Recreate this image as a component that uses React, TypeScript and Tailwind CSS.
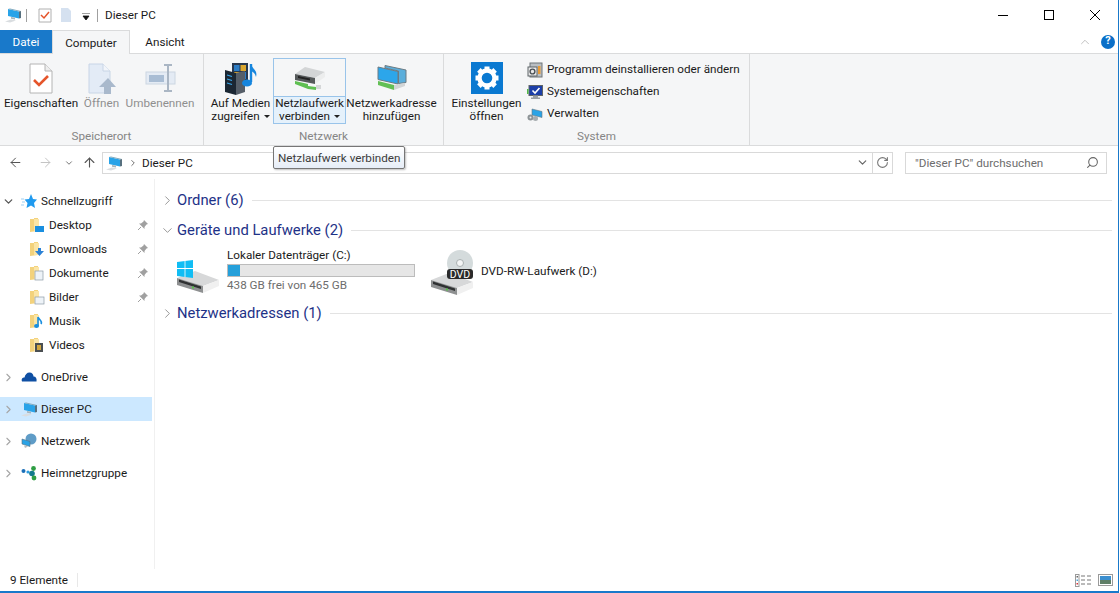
import { ArrowLeft, ArrowRight, ArrowUp, ChevronDown, ChevronRight, ChevronUp, RotateCw, Search } from "lucide-react";
import type { ReactNode } from "react";

const PcIcon = ({ size = 16 }: { size?: number }) => (
  <svg width={size} height={size} viewBox="0 0 16 16" className="shrink-0">
    <path d="M0 14.5 L6 12.5 L11 13.5 L5 15.5Z" fill="#d9dde0" />
    <path d="M3 2 L14 4.5 V11.5 L3 9Z" fill="#29a3e8" />
    <path d="M3 2 L5 1.5 L16 4 L14 4.5Z" fill="#7fa8bd" />
    <path d="M14 4.5 L16 4 V11 L14 11.5Z" fill="#57707f" />
    <path d="M6 10 L10 10.8 V12.5 L6 11.8Z" fill="#a9b4ba" />
  </svg>
);

const PageCheckIcon = () => (
  <svg width="24" height="31" viewBox="0 0 24 31">
    <path d="M1 1H16L23 8V30H1Z" fill="#fff" stroke="#b4b4b4" />
    <path d="M16 1V8H23" fill="#eee" stroke="#b4b4b4" />
    <path d="M5 17L10 22L19 13" fill="none" stroke="#e5552b" strokeWidth="2.6" />
  </svg>
);

const OpenIcon = () => (
  <svg width="28" height="31" viewBox="0 0 28 31">
    <path d="M1 1H15L22 8V30H1Z" fill="#e3ebf6" stroke="#c8d5e6" />
    <path d="M15 1V8H22" fill="#f2f5fa" stroke="#c8d5e6" />
    <path d="M20 15L28 24H23V31H16V24H11Z" fill="#a9b9cc" />
  </svg>
);

const RenameIcon = () => (
  <svg width="31" height="28" viewBox="0 0 31 28">
    <rect x="1" y="8" width="29" height="12" fill="#e4ebf4" stroke="#ccd6e2" />
    <rect x="4" y="11" width="15" height="7" fill="#a9bdd4" />
    <path d="M19 1H27M23 1V27M19 27H27" fill="none" stroke="#aab6c4" strokeWidth="2" />
  </svg>
);

const MediaIcon = () => (
  <svg width="34" height="33" viewBox="0 0 34 33">
    <path d="M8 1H24V19H8Z" fill="#27384e" />
    <rect x="10" y="3" width="5.5" height="6" fill="#2c7cc4" />
    <rect x="16.5" y="3" width="5.5" height="6" fill="#d9a62e" />
    <rect x="10" y="10" width="5.5" height="7" fill="#d9a62e" />
    <rect x="16.5" y="10" width="5.5" height="7" fill="#2c7cc4" />
    <path d="M1 8L12 11V33L1 30Z" fill="#1b2733" />
    <path d="M12 11L21 9V30L12 33Z" fill="#555e68" />
    <path d="M3 13L8 14.5M3 17L8 18.5M3 21L8 22.5" stroke="#38a5e8" strokeWidth="1.3" />
    <path d="M27 2V20" stroke="#1686de" strokeWidth="2.4" />
    <path d="M27 2C28 7 34 8 32 15C31 11 29 10 27 9Z" fill="#1686de" />
    <ellipse cx="23" cy="21" rx="5" ry="3.6" fill="#1686de" />
  </svg>
);

const NetDriveIcon = () => (
  <svg width="32" height="24" viewBox="0 0 32 24">
    <path d="M1 8L11 1L31 6L21 12Z" fill="#d3d5d6" />
    <path d="M1 8L21 12V18L1 14Z" fill="#55595a" />
    <path d="M21 12L31 6V11L21 18Z" fill="#eceded" />
    <path d="M4 10L16 12.5V14.5L4 12Z" fill="#222" />
    <path d="M1 15L14 18V20L22 21V24L14 23L1 18Z" fill="#5fbf52" />
    <rect x="22" y="19" width="5" height="4" fill="#d5d7d8" />
  </svg>
);

const NetAddressIcon = () => (
  <svg width="30" height="26" viewBox="0 0 30 26">
    <path d="M1 2L21 6.5V19L1 14.5Z" fill="#2ca6ea" stroke="#6c7b83" />
    <path d="M8 0.5L29 5V17.5L21.5 18.5V6L8 3Z" fill="#5baedb" stroke="#6c7b83" />
    <path d="M1 16L17 20V25L1 20Z" fill="#63bf55" />
    <path d="M17 20L28 18V21L17 25Z" fill="#d2d5d6" />
  </svg>
);

const SettingsIcon = () => (
  <svg width="32" height="32" viewBox="0 0 32 32">
    <rect width="32" height="32" fill="#0a79d1" />
    <circle cx="16" cy="16" r="7.5" fill="none" stroke="#fff" strokeWidth="4.4" />
    {[0, 45, 90, 135, 180, 225, 270, 315].map((a) => (
      <rect key={a} x="13.5" y="4.5" width="5" height="5" fill="#fff" transform={`rotate(${a} 16 16)`} />
    ))}
  </svg>
);

const ProgramsIcon = () => (
  <svg width="16" height="16" viewBox="0 0 16 16">
    <rect x="3" y="1" width="12" height="14" fill="#b9bec2" stroke="#6f7478" />
    <rect x="1" y="5" width="9" height="9" fill="#e9e9e9" stroke="#5e6468" />
    <circle cx="5.5" cy="9.5" r="2.4" fill="none" stroke="#4a5055" strokeWidth="1.4" />
    <rect x="11" y="4" width="2.5" height="8" fill="#e79a36" />
  </svg>
);

const SystemIcon = () => (
  <svg width="16" height="16" viewBox="0 0 16 16">
    <rect x="2" y="1.5" width="13.5" height="10" fill="#1c3fa8" stroke="#5e6468" />
    <path d="M5.5 6.5L8 9L12.5 4" fill="none" stroke="#fff" strokeWidth="1.6" />
    <rect x="0" y="5" width="1.5" height="5" fill="#52b848" />
    <path d="M6 11.5H11V13.5H13V15H4V13.5H6Z" fill="#9aa0a5" />
  </svg>
);

const ManageIcon = () => (
  <svg width="16" height="16" viewBox="0 0 16 16">
    <path d="M5 3L15 5.5V11.5L5 9Z" fill="#2aa3e6" stroke="#68777f" strokeWidth="0.6" />
    <circle cx="3.5" cy="11.5" r="3" fill="#8d9396" />
    <circle cx="8.5" cy="12.5" r="2.5" fill="#a7adb0" />
    <circle cx="3.5" cy="11.5" r="1" fill="#eee" />
  </svg>
);

const FolderIcon = ({ children }: { children?: ReactNode }) => (
  <svg width="16" height="16" viewBox="0 0 16 16" className="shrink-0">
    <path d="M1 2H5V1H9V14L1 15Z" fill="#f3d27c" />
    <path d="M5 2H10V14H5Z" fill="#fbe5a6" />
    {children}
  </svg>
);

const StarIcon = () => (
  <svg width="16" height="16" viewBox="0 0 16 16" className="shrink-0">
    <path d="M10 1L12 6L16 6.5L13 10L14 15L10 12.5L5.5 15L6.5 10L3.5 6.5L8 6Z" fill="#1f9aef" />
    <path d="M0 6H3M1 9H4M0 12H3" stroke="#9dcff2" />
  </svg>
);

const CloudIcon = () => (
  <svg width="16" height="16" viewBox="0 0 16 16" className="shrink-0">
    <path d="M1 12.5C0 10 1.5 8.5 3.5 8.5C4 5.5 6 3.5 8.5 3.5C11 3.5 12.5 5.5 12.5 7.5C15 7.5 16 9.5 15.5 12.5Z" fill="#0f4fa3" />
  </svg>
);

const NetworkIcon = () => (
  <svg width="16" height="16" viewBox="0 0 16 16" className="shrink-0">
    <circle cx="10" cy="6" r="5.5" fill="#5f9cc7" />
    <path d="M1 6L9 8.5V13.5L1 11Z" fill="#2aa3e6" stroke="#5a7080" strokeWidth="0.6" />
    <path d="M3 12.5L7 13.5L4 15Z" fill="#b7bcbf" />
  </svg>
);

const HomegroupIcon = () => (
  <svg width="16" height="16" viewBox="0 0 16 16" className="shrink-0">
    <circle cx="2.5" cy="6" r="2" fill="#1b6fb8" />
    <circle cx="7" cy="7" r="1.6" fill="#2b9be0" />
    <circle cx="12.5" cy="3.5" r="2.4" fill="#2f9e44" />
    <circle cx="11" cy="8.5" r="2.8" fill="#127a8c" />
    <circle cx="13" cy="13" r="2.4" fill="#2f9e44" />
  </svg>
);

const PinIcon = () => (
  <svg width="12" height="12" viewBox="0 0 12 12" className="shrink-0">
    <path d="M7 1L11 5L9.5 5.5L7.5 8V10L2 4.5H4L6.5 2.5Z" fill="#a0a0a0" />
    <path d="M4 8L1 11" stroke="#a0a0a0" />
  </svg>
);

// isometric disk body, shared by both drive icons
const HddBody = () => (
  <>
    <path d="M1 20L19 13L43 22L27 28Z" fill="#d7d8d9" />
    <path d="M1 20L27 28V35L1 27Z" fill="#8e9091" />
    <path d="M3 21.5L25 28.5V31L3 24Z" fill="#2f3132" />
    <path d="M27 28L43 22V28L27 35Z" fill="#f0f0f0" />
    <rect x="16" y="28.5" width="2" height="2" fill="#58c24a" />
  </>
);

const LocalDriveIcon = () => (
  <svg width="44" height="38" viewBox="0 0 44 38">
    <HddBody />
    <path d="M1 4L17 2V10H1ZM1 11H17V20L1 18Z" fill="#10bdf4" />
    <path d="M1 10.5H17M9 3V19" stroke="#fff" strokeWidth="0.8" />
  </svg>
);

const DvdDriveIcon = () => (
  <svg width="46" height="47" viewBox="0 0 46 47">
    <circle cx="30" cy="14" r="13" fill="#d4dbdc" />
    <circle cx="30" cy="14" r="3.5" fill="#f3f5f5" stroke="#a9b0b1" />
    <g transform="translate(0 11)">
      <HddBody />
    </g>
    <rect x="17" y="20" width="26" height="10" rx="3" fill="#2a2a2a" />
    <text x="30" y="29" textAnchor="middle" fontFamily="Roboto, sans-serif" fontSize="10.5" fill="#fff">
      DVD
    </text>
  </svg>
);

const BigButton = ({
  icon,
  lines,
  width,
  muted,
  active,
  arrow,
}: {
  icon: ReactNode;
  lines: string[];
  width: string;
  muted?: boolean;
  active?: boolean;
  arrow?: boolean;
}) => (
  <div className={`flex h-[66px] flex-col items-center ${width} ${active ? "border border-[#99c4ea]" : "border border-transparent"}`}>
    <div className={`flex h-[38px] w-full shrink-0 items-center justify-center ${active ? "border-b border-[#99c4ea]" : ""}`}>{icon}</div>
    <div className={`flex h-[26px] w-full flex-col items-center justify-start leading-[13px] whitespace-nowrap ${muted ? "text-[#8f8f8f]" : ""} ${active ? "bg-[#e5f1fb]" : ""}`}>
      {lines.map((line, i) => (
        <span key={line}>
          {line}
          {arrow && i === lines.length - 1 ? <span className="ml-1 inline-block h-0 w-0 border-x-[3px] border-t-[3px] border-x-transparent border-t-[#222] align-middle" /> : null}
        </span>
      ))}
    </div>
  </div>
);

const RibbonGroup = ({ label, width, children }: { label: string; width: string; children: ReactNode }) => (
  <div className={`flex shrink-0 flex-col border-r border-[#dadbdc] ${width}`}>
    <div className="flex h-[74px] items-start pt-1">{children}</div>
    <div className="text-center leading-[16px] text-[#858585]">{label}</div>
  </div>
);

const SmallButton = ({ icon, label }: { icon: ReactNode; label: string }) => (
  <div className="flex h-[22px] items-center gap-[4px]">
    {icon}
    <span>{label}</span>
  </div>
);

const NavRow = ({ icon, label, pin }: { icon: ReactNode; label: string; pin?: boolean }) => (
  <div className="flex h-6 items-center pl-[29px] pr-[3px]">
    {icon}
    <span className="ml-1 flex-1 pt-[2px]">{label}</span>
    {pin && <PinIcon />}
  </div>
);

const NavRoot = ({ icon, label, open, selected }: { icon: ReactNode; label: string; open?: boolean; selected?: boolean }) => (
  <div className={`flex h-6 items-center pl-[2px] ${selected ? "bg-[#cce8ff]" : ""}`}>
    {open ? <ChevronDown size={13} strokeWidth={2.4} className="text-[#555]" /> : <ChevronRight size={13} strokeWidth={2} className="text-[#a6a6a6]" />}
    <span className="ml-[6px] flex w-4 justify-center">{icon}</span>
    <span className="ml-[4px] pt-[2px]">{label}</span>
  </div>
);

const SectionHeader = ({ label, open }: { label: string; open?: boolean }) => (
  <div className="flex h-[22px] items-center gap-[2px] pr-[6px] text-[14.8px] text-[#1e3287]">
    {open ? <ChevronDown size={15} strokeWidth={1.2} className="text-[#777]" /> : <ChevronRight size={15} strokeWidth={1.2} className="text-[#777]" />}
    <span className="whitespace-nowrap">{label}</span>
    <div className="ml-[6px] h-px flex-1 bg-[#e3e3e3]" />
  </div>
);

export default function App() {
  return (
    <div className="relative flex h-[593px] w-[1119px] flex-col overflow-hidden border-r border-b-2 border-[#1979ca] bg-white font-['Roboto','Liberation_Sans',sans-serif] text-[11.7px] text-[#1a1a1a]">
      {/* title bar */}
      <div className="flex h-[30px] shrink-0 items-center pl-[5px]">
        <PcIcon />
        <div className="ml-[5px] h-[13px] w-px bg-[#a0a0a0]" />
        <svg width="14" height="16" viewBox="0 0 14 16" className="ml-[11px]">
          <path d="M1 2H13V15H1Z" fill="#fff" stroke="#b0b0b0" />
          <path d="M3 8L6 11L11 5" fill="none" stroke="#e5552b" strokeWidth="1.5" />
        </svg>
        <svg width="12" height="16" viewBox="0 0 12 16" className="ml-[8px]">
          <path d="M1 1H8L11 4V15H1Z" fill="#d5e1f0" />
        </svg>
        <svg width="8" height="8" viewBox="0 0 8 8" className="ml-[10px] mt-1">
          <path d="M0 0H8M1 3H7L4 7Z" fill="#111" stroke="#111" strokeWidth="0.8" />
        </svg>
        <div className="ml-[7px] h-[13px] w-px bg-[#a0a0a0]" />
        <span className="ml-[7px] pt-[2px]">Dieser PC</span>
        <div className="ml-auto flex items-center">
          <svg width="46" height="16" viewBox="0 0 46 16">
            <path d="M18 8.5H28" stroke="#000" />
          </svg>
          <svg width="46" height="16" viewBox="0 0 46 16">
            <rect x="18.5" y="3.5" width="9" height="9" fill="none" stroke="#000" />
          </svg>
          <svg width="46" height="16" viewBox="0 0 46 16">
            <path d="M18 3L28 13M28 3L18 13" stroke="#000" />
          </svg>
        </div>
      </div>

      {/* tabs */}
      <div className="flex h-[24px] shrink-0 items-stretch border-b border-[#dadbdc]">
        <div className="flex w-[52px] items-center justify-center bg-[#1979ca] pt-[2px] text-white">Datei</div>
        <div className="relative z-10 -mb-px flex w-[78px] items-center justify-center border-x border-t border-[#dadbdc] bg-[#f5f6f7] pt-[2px]">Computer</div>
        <div className="flex w-[70px] items-center justify-center pt-[2px]">Ansicht</div>
        <div className="ml-auto flex items-center gap-[9px] pr-[3px]">
          <ChevronUp size={14} strokeWidth={1.2} className="text-[#a8a8a8]" />
          <div className="flex h-[14px] w-[14px] items-center justify-center rounded-full bg-[#0a6fc8] text-[11px] font-bold text-white">?</div>
        </div>
      </div>

      {/* ribbon */}
      <div className="flex h-[92px] shrink-0 border-b border-[#dadbdc] bg-[#f5f6f7]">
        <RibbonGroup label="Speicherort" width="w-[204px]">
          <div className="flex pl-[3px]">
            <BigButton icon={<PageCheckIcon />} lines={["Eigenschaften"]} width="w-[76px]" />
            <BigButton icon={<OpenIcon />} lines={["Öffnen"]} width="w-[45px]" muted />
            <BigButton icon={<RenameIcon />} lines={["Umbenennen"]} width="w-[72px]" muted />
          </div>
        </RibbonGroup>
        <RibbonGroup label="Netzwerk" width="w-[240px]">
          <div className="flex pl-[4px]">
            <BigButton icon={<MediaIcon />} lines={["Auf Medien", "zugreifen"]} width="w-[65px]" arrow />
            <BigButton icon={<NetDriveIcon />} lines={["Netzlaufwerk", "verbinden"]} width="w-[73px]" active arrow />
            <BigButton icon={<NetAddressIcon />} lines={["Netzwerkadresse", "hinzufügen"]} width="w-[91px]" />
          </div>
        </RibbonGroup>
        <RibbonGroup label="System" width="w-[306px]">
          <div className="flex pl-[5px]">
            <BigButton icon={<SettingsIcon />} lines={["Einstellungen", "öffnen"]} width="w-[75px]" />
            <div className="mt-px ml-[3px] flex flex-col">
              <SmallButton icon={<ProgramsIcon />} label="Programm deinstallieren oder ändern" />
              <SmallButton icon={<SystemIcon />} label="Systemeigenschaften" />
              <SmallButton icon={<ManageIcon />} label="Verwalten" />
            </div>
          </div>
        </RibbonGroup>
      </div>

      {/* address row */}
      <div className="flex h-[33px] shrink-0 items-center">
        <div className="flex w-[102px] items-center pl-[8px]">
          <ArrowLeft size={15} strokeWidth={1.6} className="text-[#555]" />
          <ArrowRight size={15} strokeWidth={1.6} className="ml-[15px] text-[#c4c4c4]" />
          <ChevronDown size={10} strokeWidth={2.4} className="ml-[11px] text-[#777]" />
          <ArrowUp size={15} strokeWidth={1.8} className="ml-[8px] text-[#555]" />
        </div>
        <div className="flex h-[22px] w-[791px] items-center border border-[#d9d9d9]">
          <span className="ml-[3px]"><PcIcon /></span>
          <ChevronRight size={10} className="ml-[6px] text-[#555]" />
          <span className="ml-[4px] pt-[2px]">Dieser PC</span>
          <div className="ml-auto flex h-full items-center">
            <ChevronDown size={13} strokeWidth={2.2} className="mr-[3px] text-[#666]" />
            <div className="flex h-full w-[20px] items-center justify-center border-l border-[#d9d9d9]">
              <RotateCw size={13} strokeWidth={2} className="text-[#777]" />
            </div>
          </div>
        </div>
        <div className="ml-[12px] flex h-[22px] w-[202px] items-center justify-between border border-[#d9d9d9] pr-[7px] pl-[9px] text-[#6d6d6d]">
          <span className="pt-[2px]">"Dieser PC" durchsuchen</span>
          <Search size={13} strokeWidth={2} className="-scale-x-100 text-[#666]" />
        </div>
      </div>

      {/* main */}
      <div className="flex min-h-0 flex-1">
        <div className="w-[155px] shrink-0 border-r border-[#f0f0f0] pt-[10px] pr-[2px]">
          <NavRoot icon={<StarIcon />} label="Schnellzugriff" open />
          <NavRow label="Desktop" pin icon={<FolderIcon><rect x="6" y="9" width="9" height="6" fill="#1a8fe0" /></FolderIcon>} />
          <NavRow label="Downloads" pin icon={<FolderIcon><path d="M9 7H12V10H15L10.5 15L6 10H9Z" fill="#2c82d6" /></FolderIcon>} />
          <NavRow label="Dokumente" pin icon={<FolderIcon><rect x="6" y="6" width="8" height="9" fill="#eef3f8" stroke="#8d9aa6" strokeWidth="0.7" /></FolderIcon>} />
          <NavRow label="Bilder" pin icon={<FolderIcon><rect x="6" y="8" width="9" height="7" fill="#eef3f8" stroke="#8d9aa6" strokeWidth="0.7" /></FolderIcon>} />
          <NavRow label="Musik" icon={<FolderIcon><path d="M9 4V13M9 4C10 7 14 8 12 11" fill="none" stroke="#1a8fe0" strokeWidth="1.6" /><ellipse cx="7.5" cy="13" rx="2.5" ry="2" fill="#1a8fe0" /></FolderIcon>} />
          <NavRow label="Videos" icon={<FolderIcon><rect x="6" y="6" width="8" height="9" fill="#4a4f52" /><rect x="8" y="8" width="4" height="5" fill="#d3a73f" /></FolderIcon>} />
          <div className="h-2" />
          <NavRoot icon={<CloudIcon />} label="OneDrive" />
          <div className="h-2" />
          <NavRoot icon={<PcIcon />} label="Dieser PC" selected />
          <div className="h-2" />
          <NavRoot icon={<NetworkIcon />} label="Netzwerk" />
          <div className="h-2" />
          <NavRoot icon={<HomegroupIcon />} label="Heimnetzgruppe" />
        </div>

        <div className="min-w-0 flex-1 pt-[10px] pl-[5px]">
          <SectionHeader label="Ordner (6)" />
          <div className="h-2" />
          <SectionHeader label="Geräte und Laufwerke (2)" open />
          <div className="flex h-[61px] pl-[16px] pt-[1px]">
            <div className="flex w-[254px] items-start">
              <div className="mt-[16px] w-[51px] shrink-0"><LocalDriveIcon /></div>
              <div className="mt-[5px] flex w-[188px] flex-col">
                <span className="leading-[16px]">Lokaler Datenträger (C:)</span>
                <div className="mt-[1px] h-[13px] border border-[#bcbcbc] bg-[#e6e6e6]">
                  <div className="h-full w-[12px] bg-[#26a0da]" />
                </div>
                <span className="leading-[17px] text-[#6d6d6d]">438 GB frei von 465 GB</span>
              </div>
            </div>
            <div className="flex items-start">
              <div className="mt-[7px] w-[51px] shrink-0"><DvdDriveIcon /></div>
              <span className="mt-[21px] leading-[16px]">DVD-RW-Laufwerk (D:)</span>
            </div>
          </div>
          <SectionHeader label="Netzwerkadressen (1)" />
        </div>
      </div>

      {/* status bar */}
      <div className="flex h-[22px] shrink-0 items-center justify-between pl-[10px] pr-[5px]">
        <div className="flex h-full items-center">
          <span className="pt-[2px]">9 Elemente</span>
          <div className="ml-[9px] h-[14px] w-px bg-[#e8e8e8]" />
        </div>
        <div className="flex items-center gap-[7px]">
          <svg width="16" height="13" viewBox="0 0 16 13">
            <rect x="0.5" y="0.5" width="3.5" height="12" fill="#fff" stroke="#9a9a9a" />
            <rect x="1.5" y="2" width="1.5" height="1.5" fill="#666" />
            <rect x="1.5" y="5.5" width="1.5" height="1.5" fill="#4aa5df" />
            <rect x="1.5" y="9" width="1.5" height="1.5" fill="#d9363e" />
            <path d="M6 2H10M12 2H16M6 6H10M12 6H16M6 10H10M12 10H16" stroke="#777" />
          </svg>
          <svg width="15" height="12" viewBox="0 0 15 12">
            <rect x="0.5" y="0.5" width="14" height="11" fill="#fff" stroke="#9a9a9a" />
            <rect x="2" y="2" width="11" height="4" fill="#3b8fd0" />
            <rect x="2" y="6" width="11" height="4" fill="#5f7f67" />
          </svg>
        </div>
      </div>

      {/* tooltip */}
      <div className="absolute top-[146px] left-[273px] z-20 flex h-[23px] items-center rounded-[2px] border border-[#767676] bg-gradient-to-b from-white to-[#e6edf7] px-[4px] pt-[2px] text-[#3c3c3c] shadow-[1px_1px_2px_rgba(0,0,0,0.25)]">
        Netzlaufwerk verbinden
      </div>
    </div>
  );
}
